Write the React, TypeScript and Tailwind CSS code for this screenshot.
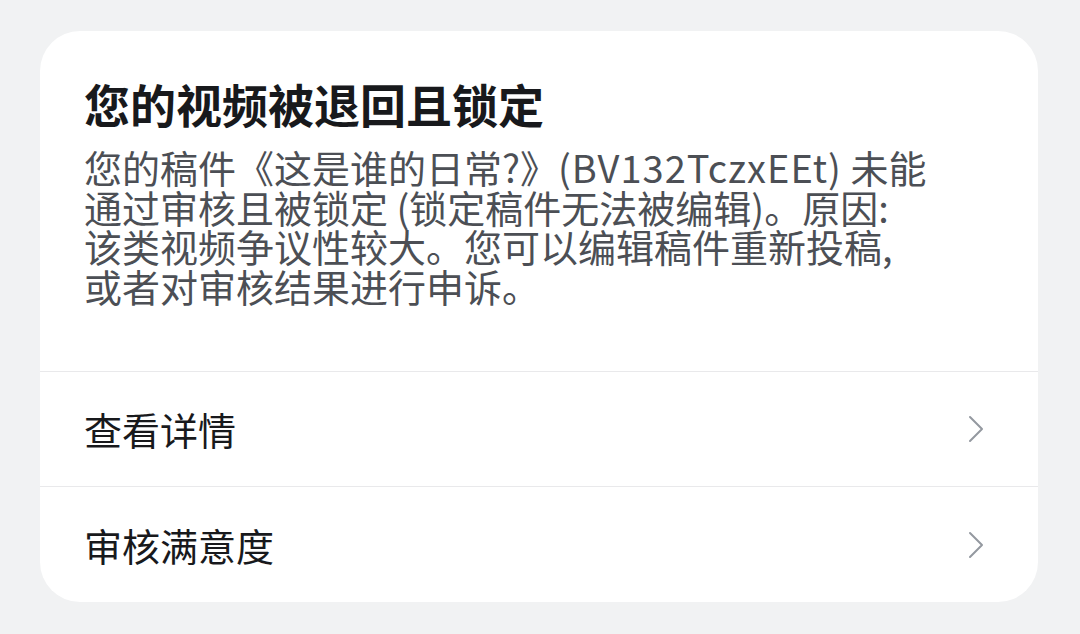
import { ChevronRight } from 'lucide-react'

const font = { fontFamily: '"PingFang SC", "Noto Sans CJK SC", "Noto Sans", sans-serif' }

function Row({ label, last }: { label: string; last?: boolean }) {
  return (
    <div className={`flex h-[115px] items-center justify-between pl-[44px] pr-[38px] ${last ? '' : 'border-b border-[#e9e9eb]'}`}>
      <span className="text-[38px] leading-none text-[#18191c]">{label}</span>
      <ChevronRight className="h-[48px] w-[48px] text-[#9499a0]" strokeWidth={1} />
    </div>
  )
}

export default function App() {
  return (
    <div className="h-[634px] w-[1080px] bg-[#f1f2f3] pt-[31px] pl-[40px]" style={font}>
      <div className="w-[998px] overflow-hidden rounded-[40px] bg-white">
        {/* message */}
        <div className="border-b border-[#e9e9eb] px-[44px] pt-[44px] pb-[66px]">
          <h1 className="text-[46px] font-bold leading-[56px] text-[#18191c]">您的视频被退回且锁定</h1>
          <div className="mt-[16px] text-[38px] leading-[39.5px] whitespace-nowrap text-[#4c4f55]">
            <div>
              您的稿件《这是谁的日常?》<span className="tracking-[1px]">(BV132TczxEEt)</span> 未能
            </div>
            <div>通过审核且被锁定 (锁定稿件无法被编辑)。原因:</div>
            <div>该类视频争议性较大。您可以编辑稿件重新投稿,</div>
            <div>或者对审核结果进行申诉。</div>
          </div>
        </div>
        <Row label="查看详情" />
        <Row label="审核满意度" last />
      </div>
    </div>
  )
}
